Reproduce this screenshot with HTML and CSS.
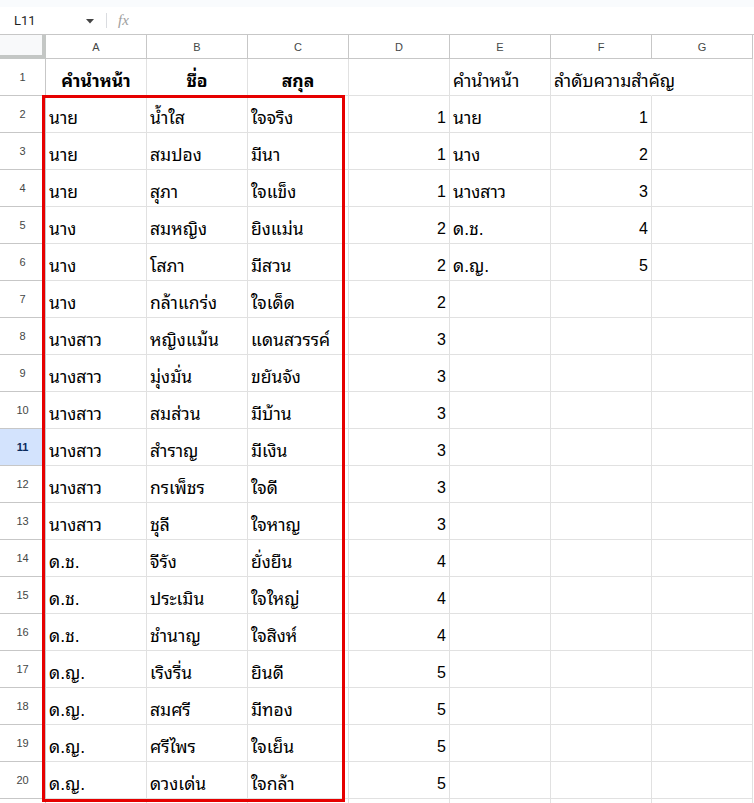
FILE: index.html
```html
<!DOCTYPE html>
<html lang="th">
<head>
    <meta charset="UTF-8">
    <meta name="viewport" content="width=device-width, initial-scale=1.0">
    <title>Sheet</title>
    <link rel="stylesheet" href="styles.css">
</head>
<body>
    <div class="topstrip"></div>
    <div class="formula-bar">
        <div class="name-box">
            <span>L11</span>
            <svg class="caret" width="8" height="5" viewBox="0 0 8 5"><path d="M0 0h8L4 4.5z" fill="#444"/></svg>
        </div>
        <div class="divider"></div>
        <span class="fx">fx</span>
    </div>

    <div class="sheet">
        <div class="grid">
            <div class="corner"></div>
            <div class="col-head">A</div><div class="col-head">B</div><div class="col-head">C</div><div class="col-head">D</div><div class="col-head">E</div><div class="col-head">F</div><div class="col-head">G</div>

            <div class="row-head">1</div>
            <div class="cell bold center">คำนำหน้า</div><div class="cell bold center">ชื่อ</div><div class="cell bold center">สกุล</div><div class="cell"></div><div class="cell">คำนำหน้า</div><div class="cell spill">ลำดับความสำคัญ</div><div class="cell"></div>

            <div class="row-head">2</div>
            <div class="cell">นาย</div><div class="cell">น้ำใส</div><div class="cell">ใจจริง</div><div class="cell num">1</div><div class="cell">นาย</div><div class="cell num">1</div><div class="cell"></div>

            <div class="row-head">3</div>
            <div class="cell">นาย</div><div class="cell">สมปอง</div><div class="cell">มีนา</div><div class="cell num">1</div><div class="cell">นาง</div><div class="cell num">2</div><div class="cell"></div>

            <div class="row-head">4</div>
            <div class="cell">นาย</div><div class="cell">สุภา</div><div class="cell">ใจแข็ง</div><div class="cell num">1</div><div class="cell">นางสาว</div><div class="cell num">3</div><div class="cell"></div>

            <div class="row-head">5</div>
            <div class="cell">นาง</div><div class="cell">สมหญิง</div><div class="cell">ยิงแม่น</div><div class="cell num">2</div><div class="cell">ด.ช.</div><div class="cell num">4</div><div class="cell"></div>

            <div class="row-head">6</div>
            <div class="cell">นาง</div><div class="cell">โสภา</div><div class="cell">มีสวน</div><div class="cell num">2</div><div class="cell">ด.ญ.</div><div class="cell num">5</div><div class="cell"></div>

            <div class="row-head">7</div>
            <div class="cell">นาง</div><div class="cell">กล้าแกร่ง</div><div class="cell">ใจเด็ด</div><div class="cell num">2</div><div class="cell"></div><div class="cell"></div><div class="cell"></div>

            <div class="row-head">8</div>
            <div class="cell">นางสาว</div><div class="cell">หญิงแม้น</div><div class="cell">แดนสวรรค์</div><div class="cell num">3</div><div class="cell"></div><div class="cell"></div><div class="cell"></div>

            <div class="row-head">9</div>
            <div class="cell">นางสาว</div><div class="cell">มุ่งมั่น</div><div class="cell">ขยันจัง</div><div class="cell num">3</div><div class="cell"></div><div class="cell"></div><div class="cell"></div>

            <div class="row-head">10</div>
            <div class="cell">นางสาว</div><div class="cell">สมส่วน</div><div class="cell">มีบ้าน</div><div class="cell num">3</div><div class="cell"></div><div class="cell"></div><div class="cell"></div>

            <div class="row-head selected">11</div>
            <div class="cell">นางสาว</div><div class="cell">สำราญ</div><div class="cell">มีเงิน</div><div class="cell num">3</div><div class="cell"></div><div class="cell"></div><div class="cell"></div>

            <div class="row-head">12</div>
            <div class="cell">นางสาว</div><div class="cell">กรเพ็ชร</div><div class="cell">ใจดี</div><div class="cell num">3</div><div class="cell"></div><div class="cell"></div><div class="cell"></div>

            <div class="row-head">13</div>
            <div class="cell">นางสาว</div><div class="cell">ชุลี</div><div class="cell">ใจหาญ</div><div class="cell num">3</div><div class="cell"></div><div class="cell"></div><div class="cell"></div>

            <div class="row-head">14</div>
            <div class="cell">ด.ช.</div><div class="cell">จีรัง</div><div class="cell">ยั่งยืน</div><div class="cell num">4</div><div class="cell"></div><div class="cell"></div><div class="cell"></div>

            <div class="row-head">15</div>
            <div class="cell">ด.ช.</div><div class="cell">ประเมิน</div><div class="cell">ใจใหญ่</div><div class="cell num">4</div><div class="cell"></div><div class="cell"></div><div class="cell"></div>

            <div class="row-head">16</div>
            <div class="cell">ด.ช.</div><div class="cell">ชำนาญ</div><div class="cell">ใจสิงห์</div><div class="cell num">4</div><div class="cell"></div><div class="cell"></div><div class="cell"></div>

            <div class="row-head">17</div>
            <div class="cell">ด.ญ.</div><div class="cell">เริงรื่น</div><div class="cell">ยินดี</div><div class="cell num">5</div><div class="cell"></div><div class="cell"></div><div class="cell"></div>

            <div class="row-head">18</div>
            <div class="cell">ด.ญ.</div><div class="cell">สมศรี</div><div class="cell">มีทอง</div><div class="cell num">5</div><div class="cell"></div><div class="cell"></div><div class="cell"></div>

            <div class="row-head">19</div>
            <div class="cell">ด.ญ.</div><div class="cell">ศรีไพร</div><div class="cell">ใจเย็น</div><div class="cell num">5</div><div class="cell"></div><div class="cell"></div><div class="cell"></div>

            <div class="row-head">20</div>
            <div class="cell">ด.ญ.</div><div class="cell">ดวงเด่น</div><div class="cell">ใจกล้า</div><div class="cell num">5</div><div class="cell"></div><div class="cell"></div><div class="cell"></div>

            <!-- row 21 only peeks in at the bottom edge -->
            <div class="row-head"></div>
            <div class="cell"></div><div class="cell"></div><div class="cell"></div><div class="cell"></div><div class="cell"></div><div class="cell"></div><div class="cell"></div>
        </div>
        <!-- red annotation box drawn over A2:C20 -->
        <div class="highlight"></div>
    </div>
</body>
</html>
```

FILE: styles.css
```css
body {
  margin: 0;
  background-color: #ffffff;
  font-family: "Liberation Sans", Arial, "Noto Sans Thai Looped", sans-serif;
  color: #000;
  overflow: hidden;
}

.topstrip {
  height: 7px;
  background-color: #f9fbfd;
}

.formula-bar {
  display: flex;
  align-items: center;
  height: 27px;
  border-bottom: 1px solid #c7c7c7;
  background-color: #fff;
}

.name-box {
  display: flex;
  align-items: center;
  justify-content: space-between;
  width: 80px;
  padding-left: 14px;
  padding-right: 12px;
  font-family: Roboto, "Liberation Sans", sans-serif;
  font-size: 13px;
  color: #1f1f1f;
}

.caret {
  margin-top: 1px;
}

.divider {
  width: 1px;
  height: 15px;
  background-color: #dadce0;
}

.fx {
  margin-left: 11px;
  font-family: "Liberation Serif", serif;
  font-style: italic;
  font-size: 15px;
  color: #9e9e9e;
}

.sheet {
  position: relative;
}

.grid {
  display: grid;
  grid-template-columns: 46px repeat(7, 101px);
  grid-template-rows: 24px repeat(21, 37px);
}

.corner {
  background-color: #f8f9fa;
  border-right: 4px solid #c4c7c5;
  border-bottom: 4px solid #c4c7c5;
}

.col-head {
  display: flex;
  align-items: center;
  justify-content: center;
  border-right: 1px solid #c7c7c7;
  border-bottom: 1px solid #c7c7c7;
  font-size: 11px;
  color: #444746;
}

.row-head {
  display: flex;
  align-items: center;
  justify-content: center;
  border-right: 1px solid #c7c7c7;
  border-bottom: 1px solid #c7c7c7;
  font-size: 11px;
  color: #444746;
}

.row-head.selected {
  background-color: #d3e3fd;
  color: #0b2a5c;
  font-weight: bold;
}

.cell {
  display: flex;
  align-items: flex-end;
  padding: 0 3px 4px 3px;
  border-right: 1px solid #e1e1e1;
  border-bottom: 1px solid #e1e1e1;
  font-size: 17.5px;
  line-height: 20px;
  white-space: nowrap;
  min-width: 0;
}

.cell.bold {
  font-weight: bold;
}

.cell.center {
  justify-content: center;
}

.cell.num {
  justify-content: flex-end;
  font-size: 16px;
}

.cell.spill {
  overflow: visible;
  border-right-color: transparent;
}

.highlight {
  position: absolute;
  left: 42px;
  top: 60px;
  width: 297px;
  height: 701px;
  border: 3px solid #e60000;
}
```
